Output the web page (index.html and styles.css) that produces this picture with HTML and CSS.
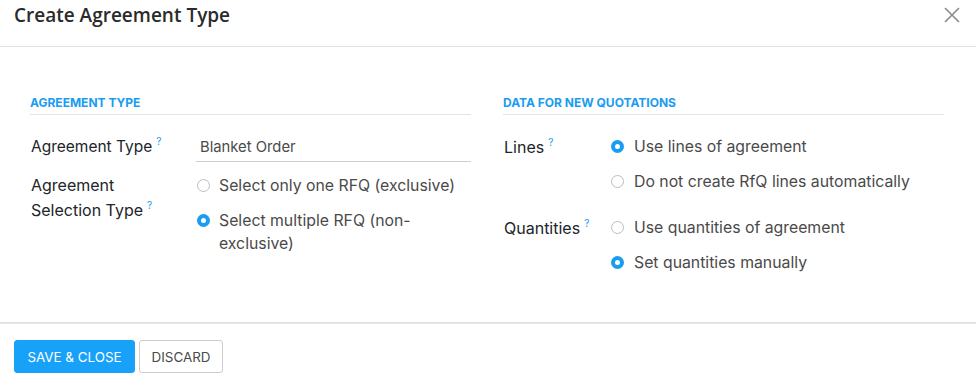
FILE: index.html
```html
<!DOCTYPE html>
<html>
<head>
<meta charset="utf-8">
<link rel="stylesheet" href="styles.css">
</head>
<body>
<div class="modal">
  <header class="modal-header">
    <h4 class="modal-title">Create Agreement Type</h4>
    <button class="close" aria-label="Close">
      <svg width="16" height="16" viewBox="0 0 16 16"><path d="M1 1L15 15M15 1L1 15" stroke="#8a8a8a" stroke-width="1.6" fill="none"/></svg>
    </button>
  </header>
  <main class="modal-body">
    <section class="group">
      <div class="section-title">AGREEMENT TYPE</div>
      <div class="field">
        <div class="label label-input">Agreement Type<sup>?</sup></div>
        <div class="input">Blanket Order</div>
      </div>
      <div class="field field-2">
        <div class="label label-multi">Agreement Selection Type<sup>?</sup></div>
        <div class="radios">
          <div class="radio"><span class="dot"></span><span class="rtext">Select only one RFQ (exclusive)</span></div>
          <div class="radio"><span class="dot on"></span><span class="rtext">Select multiple RFQ (non-exclusive)</span></div>
        </div>
      </div>
    </section>
    <section class="group right">
      <div class="section-title">DATA FOR NEW QUOTATIONS</div>
      <div class="field rfield">
        <div class="label">Lines<sup>?</sup></div>
        <div class="radios">
          <div class="radio"><span class="dot on"></span><span class="rtext">Use lines of agreement</span></div>
          <div class="radio"><span class="dot"></span><span class="rtext">Do not create RfQ lines automatically</span></div>
        </div>
      </div>
      <div class="field rfield">
        <div class="label">Quantities<sup>?</sup></div>
        <div class="radios">
          <div class="radio"><span class="dot"></span><span class="rtext">Use quantities of agreement</span></div>
          <div class="radio"><span class="dot on"></span><span class="rtext">Set quantities manually</span></div>
        </div>
      </div>
    </section>
  </main>
  <footer class="modal-footer">
    <button class="btn btn-primary">SAVE &amp; CLOSE</button>
    <button class="btn btn-secondary">DISCARD</button>
  </footer>
</div>
</body>
</html>
```
FILE: styles.css
```css
html, body {
  margin: 0;
  padding: 0;
  background: #fff;
}
body {
  font-family: Inter, Roboto, sans-serif;
  color: #212529;
}
.modal {
  width: 976px;
  height: 389px;
  display: flex;
  flex-direction: column;
}
.modal-header {
  height: 47px;
  box-sizing: border-box;
  border-bottom: 1px solid #dee2e6;
  display: flex;
  align-items: flex-start;
  justify-content: space-between;
  padding: 2px 16px 0 14px;
}
.modal-title {
  margin: 0;
  font-family: "Open Sans", sans-serif;
  font-weight: 600;
  font-size: 19px;
  line-height: 26px;
  color: #2b2b2b;
}
.close {
  border: 0;
  background: none;
  padding: 0;
  margin-top: 5px;
  width: 16px;
  height: 16px;
  cursor: pointer;
}
.close svg { display: block; }
.modal-body {
  height: 276px;
  box-sizing: border-box;
  padding: 48px 32px 0 30px;
  display: grid;
  grid-template-columns: 441px 441px;
  column-gap: 32px;
  border-bottom: 1px solid #dee2e6;
}
.section-title {
  font-size: 12px;
  font-weight: 700;
  line-height: 16px;
  color: #1a9cf0;
  padding-bottom: 3px;
  border-bottom: 1px solid #e4e4e4;
  margin-bottom: 18px;
}
.field {
  display: grid;
  grid-template-columns: 166px 1fr;
  align-items: start;
  font-size: 16px;
}
.label {
  line-height: 24px;
  padding-left: 1px;
  color: #212529;
}
.label sup {
  color: #1a9cf0;
  font-size: 10px;
  margin-left: 4px;
  vertical-align: 7px;
  line-height: 0;
}
.label-input { padding-top: 2px; font-size: 15.5px; }
.input {
  font-size: 14.8px;
  line-height: 22px;
  padding: 3px 4px 3px 4px;
  border-bottom: 1px solid #cfcfcf;
  color: #4a4a4a;
}
.field-2 { margin-top: 12px; }
.label-multi { line-height: 25px; margin-top: -1px; width: 136px; }
.radios { display: flex; flex-direction: column; gap: 12px; }
.radio {
  display: flex;
  align-items: flex-start;
  line-height: 23px;
  font-size: 15.8px;
  color: #4a4a4a;
}
.dot {
  flex: none;
  width: 13px;
  height: 13px;
  box-sizing: border-box;
  border: 1px solid #bdbdbd;
  border-radius: 50%;
  margin: 5px 9px 0 1px;
  background: #fff;
}
.dot.on {
  border: 4px solid #1a9cf0;
}
.rtext { flex: 1; }
.right .field { grid-template-columns: 107px 1fr; }
.rfield { padding-top: 2px; margin-bottom: 21px; }
.right .dot { margin-right: 10px; }
.modal-footer {
  flex: 1;
  padding: 16px 14px 0;
  display: flex;
  align-items: flex-start;
  gap: 4px;
  border-top: 1px solid #e6e8eb;
}
.btn {
  height: 33px;
  font-family: Inter, Roboto, sans-serif;
  font-size: 13.4px;
  border-radius: 3px;
  padding: 0 10px;
  cursor: pointer;
}
.btn-primary {
  background: #17a1f9;
  color: #fff;
  border: 1px solid #17a1f9;
  width: 121px;
}
.btn-secondary {
  background: #fff;
  color: #4a4a4a;
  border: 1px solid #cccccc;
  width: 84px;
}
```
